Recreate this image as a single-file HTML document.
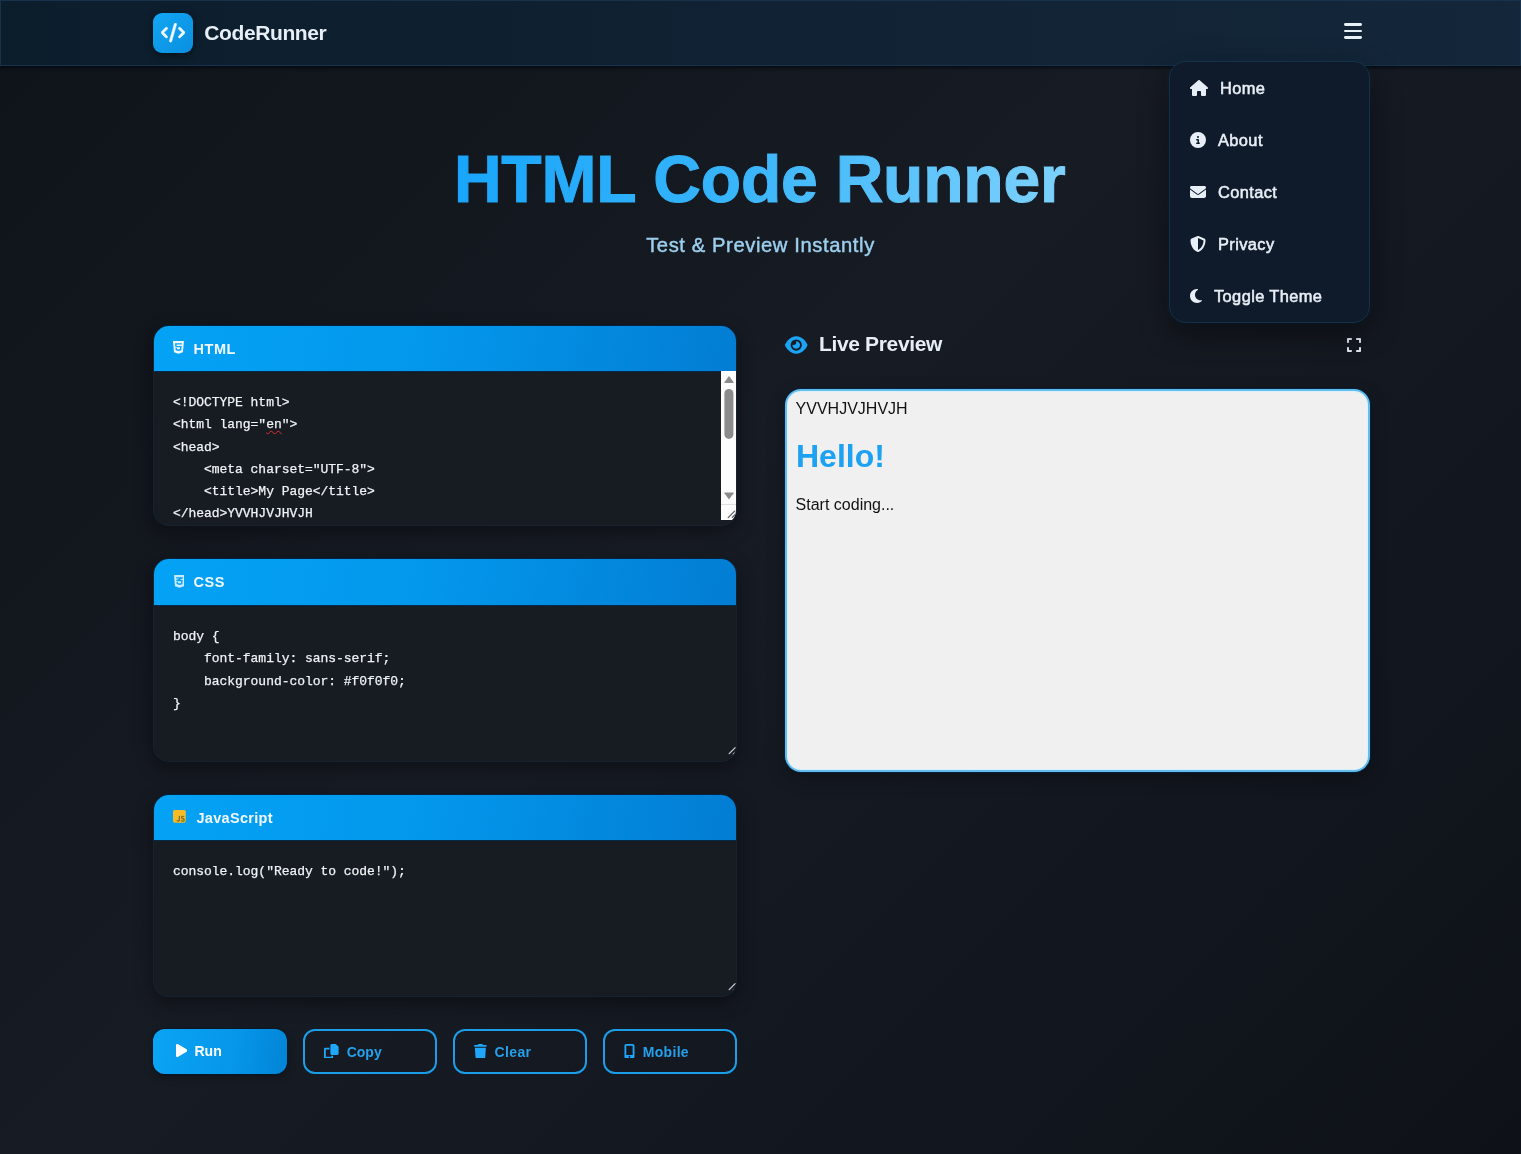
<!DOCTYPE html>
<html lang="en">
<head>
<meta charset="UTF-8">
<title>HTML Code Runner</title>
<style>
*{box-sizing:border-box;margin:0;padding:0}
html,body{width:1521px;height:1154px;overflow:hidden}
body{
  font-family:"Liberation Sans",sans-serif;
  background:linear-gradient(135deg,#0f141a 0%,#13171e 25%,#171b23 45%,#13171f 70%,#0e1218 100%);
  color:#e6edf5;position:relative;
}

/* header */
.hdr{position:absolute;left:0;top:0;width:1521px;height:66px;
  background:linear-gradient(90deg,#0c1d2c 0%,#102233 50%,#14273a 100%);
  box-shadow:inset 0 0 0 1px #17324a, 0 2px 3px rgba(2,8,16,.75)}
.logo{position:absolute;left:153px;top:13px;width:40px;height:40px;border-radius:9px;
  background:linear-gradient(135deg,#12a6f3,#0a8fe0);box-shadow:0 2px 8px rgba(0,0,0,.45)}
.logo svg{position:absolute}
.brand{position:absolute;left:204.3px;top:19px;font-size:21px;font-weight:700;line-height:28px;color:#e8eef6;letter-spacing:-0.4px}
.burger{position:absolute;left:1343.5px;top:23px;width:18px;height:16px}
.burger i{position:absolute;left:0;width:18px;height:2.7px;border-radius:1.4px;background:#e8f0f8}
/* dropdown */
.menu{position:absolute;left:1169px;top:61px;width:201px;height:262px;border-radius:17px;
  background:#0f1b2b;border:1px solid #13324a;box-shadow:0 10px 30px rgba(0,0,0,.45),0 0 10px rgba(30,120,190,.10)}
.mi{position:absolute;left:0;width:100%;height:52px;font-size:16.4px;font-weight:400;color:#e8eef6}
.mi span{position:absolute;top:16.5px;line-height:18px;white-space:nowrap;-webkit-text-stroke:0.55px #e8eef6;letter-spacing:0.4px}
.mi svg{position:absolute}
/* hero */
h1.title{position:absolute;left:0;top:139px;width:1519.4px;text-align:center;font-size:66px;line-height:80px;font-weight:700;letter-spacing:-0.2px;
  white-space:nowrap}
h1.title span{display:inline-block;padding:0 4px;background:linear-gradient(100deg,#17a5fb 0%,#37b4fb 45%,#7fd2fc 100%);-webkit-background-clip:text;background-clip:text;color:transparent;-webkit-text-stroke:1.1px transparent}
.sub{position:absolute;left:0;top:231px;width:1521px;text-align:center;font-size:20.2px;line-height:28px;font-weight:400;color:#9ccfee;-webkit-text-stroke:0.45px #9ccfee;letter-spacing:0.6px}
/* panels */
.panel{position:absolute;left:153px;width:584px;border-radius:16px;background:#171b22;border:1px solid #16232f;border-top-color:#04213f;overflow:hidden}
.pshadow{position:absolute;left:153px;width:584px;border-radius:16px;box-shadow:0 6px 18px rgba(0,0,0,.38)}
.ph{position:absolute;left:0;top:0;width:100%;height:46px;background:linear-gradient(100deg,#04a2f5 0%,#0398ec 45%,#027dd3 100%);border-bottom:1px solid #05294a}
.ph span{position:absolute;left:39.5px;top:13.5px;font-size:14.5px;line-height:18px;font-weight:700;color:#f2f8fd;letter-spacing:0.55px}
.ph svg{position:absolute}
pre.code{position:absolute;left:19px;top:66px;font-family:"Liberation Mono",monospace;font-size:13px;line-height:22.3px;color:#f0f3f6;letter-spacing:-0.04px;white-space:pre;-webkit-text-stroke:0.25px #f0f3f6}
.sp{text-decoration:underline wavy #e5282e;text-decoration-thickness:1.2px;text-underline-offset:1.6px}
/* buttons */
.btn{font-family:inherit;background:transparent;padding:0;margin:0;text-align:left;display:block;position:absolute;top:1029px;width:134px;height:45px;border-radius:12px;border:2px solid #1c9de8;color:#25a1ec;font-size:14px;font-weight:700}
.btn span{position:absolute;top:12px;line-height:18px}
.btn svg{position:absolute}
.btn.run{background:linear-gradient(100deg,#0ba4f4 0%,#0696ea 60%,#0284d6 100%);border:none;color:#fff;box-shadow:0 0 0 1px rgba(2,22,44,.55),0 3px 10px rgba(0,0,0,.3)}
/* preview */
.pv-title{position:absolute;left:819px;top:330px;font-size:21px;line-height:28px;font-weight:700;color:#e8eef6;letter-spacing:-0.35px}
.frame{position:absolute;left:785px;top:389px;width:585px;height:383px;border-radius:16px;background:#f0f0f0;border:2px solid #62bdec;
  box-shadow:0 0 0 1px rgba(3,35,70,.8), inset 0 0 0 1px #dcf1fb, 0 6px 18px rgba(0,0,0,.3)}
.frame .t1{position:absolute;left:8.6px;top:9px;font-size:16px;line-height:18px;color:#111}
.frame .h{position:absolute;left:9px;top:47px;font-size:32px;line-height:37px;font-weight:700;color:#1da1f2}
.frame .t2{position:absolute;left:8.6px;top:105px;font-size:16px;line-height:18px;color:#111}
</style>
</head>
<body>
<div id="root" style="position:absolute;left:0;top:0;width:1521px;height:1154px;will-change:transform">

<!-- HEADER -->
<header class="hdr">
  <div class="logo"><svg style="left:8px;top:10.4px;position:absolute;" width="24.00" height="19.2" viewBox="0 0 640 512" fill="#eef8ff" stroke="#eef8ff" stroke-width="14" stroke-linejoin="round"><path d="M392.800 1.200c-17-4.900-34.700 5-39.600 22l-128 448c-4.900 17 5 34.700 22 39.600s34.700-5 39.600-22l128-448c4.900-17-5-34.700-22-39.600zm80.600 120.100c-12.500 12.500-12.500 32.800 0 45.300L562.700 256l-89.400 89.400c-12.500 12.500-12.500 32.800 0 45.300s32.800 12.500 45.300 0l112-112c12.500-12.500 12.500-32.800 0-45.300l-112-112c-12.500-12.500-32.800-12.500-45.300 0zm-306.700 0c-12.500-12.500-32.800-12.500-45.300 0l-112 112c-12.500 12.500-12.500 32.800 0 45.300l112 112c12.500 12.500 32.800 12.500 45.300 0s12.500-32.800 0-45.300L77.300 256l89.400-89.400c12.500-12.500 12.500-32.800 0-45.300z"/></svg></div>
  <div class="brand">CodeRunner</div>
  <div class="burger"><i style="top:0"></i><i style="top:6.5px"></i><i style="top:13px"></i></div>
</header>

<!-- HERO -->
<h1 class="title"><span>HTML Code Runner</span></h1>
<div class="sub">Test &amp; Preview Instantly</div>

<!-- PANELS -->
<div class="pshadow" style="top:325px;height:201px"></div>
<div class="panel" style="top:325px;height:201px">
  <div class="ph"><svg style="left:19.0px;top:14.0px;" width="10.95" height="14.6" viewBox="0 0 384 512" fill="#f2f9fe"><path d="M0 32l34.900 395.800L191.500 480l157.600-52.200L384 32H0zm308.200 127.900H124.400l4.100 49.400h175.600l-13.600 148.400-97.900 27v.3h-1.100l-98.700-27.300-6-75.800h47.700L138 320l53.500 14.500 53.700-14.500 6-62.200H84.300L71.500 112.200h241.100l-4.400 47.700z"/></svg><span>HTML</span></div>
<pre class="code">&lt;!DOCTYPE html&gt;
&lt;html lang="<span class="sp">en</span>"&gt;
&lt;head&gt;
    &lt;meta charset="UTF-8"&gt;
    &lt;title&gt;My Page&lt;/title&gt;
&lt;/head&gt;YVVHJVJHVJH</pre>
  <svg class="sb" style="position:absolute;left:567px;top:45px" width="15" height="149" viewBox="0 0 15 149">
    <rect x="0" y="0" width="15" height="149" fill="#fcfcfc"/>
    <path d="M8 4.9 L12.6 11.2 Q12.9 11.9 12.1 11.9 L3.9 11.9 Q3.1 11.9 3.4 11.2 Z" fill="#8b8b8b"/>
    <rect x="3.4" y="17.9" width="9" height="50" rx="4.5" fill="#8b8b8b"/>
    <path d="M8 128.6 L12.6 122.3 Q12.9 121.6 12.1 121.6 L3.9 121.6 Q3.1 121.6 3.4 122.3 Z" fill="#8b8b8b"/>
    <rect x="0" y="133" width="15" height="1" fill="#dedede"/>
    <path d="M7.2 146.6 L13.6 140.2 M11.3 146.4 L13.7 144" stroke="#5a5a5a" stroke-width="1.2" fill="none" stroke-linecap="round"/>
  </svg>
</div>

<div class="pshadow" style="top:558px;height:204px"></div>
<div class="panel" style="top:558px;height:204px">
  <div class="ph" style="height:47px"><svg style="left:19.5px;top:15.0px;" width="10.95" height="14.6" viewBox="0 0 384 512" fill="#c9ebfc"><path d="M0 32l34.900 395.800L192 480l157.100-52.200L384 32H0zm313.100 80l-4.800 47.300L193 208.600l-.3.100h111.500l-12.800 146.600-98.200 28.700-98.800-29.200-6.400-73.900h48.900l3.200 38.300 52.600 13.300 54.700-15.400 3.700-61.600-166.300-.5v-.1l-.2.100-3.600-46.300L193.100 162l6.500-2.700H76.700L70.900 112h242.200z"/></svg><span>CSS</span></div>
<pre class="code" style="top:67px">body {
    font-family: sans-serif;
    background-color: #f0f0f0;
}</pre>
  <svg style="position:absolute;left:573px;top:186px" width="10" height="10" viewBox="0 0 10 10"><path d="M2.2 8.6 L8.2 2.6" stroke="#c9cdd3" stroke-width="1.3" stroke-linecap="round" fill="none"/><path d="M6.2 9.2 L8.8 6.6" stroke="#c9cdd3" stroke-width="1.1" stroke-linecap="round" fill="none"/></svg>
</div>

<div class="pshadow" style="top:794px;height:203px"></div>
<div class="panel" style="top:794px;height:203px">
  <div class="ph"><svg style="left:19.4px;top:14.2px;" width="12.78" height="14.6" viewBox="0 0 448 512" fill="#f8bb25"><rect x="100" y="225" width="330" height="235" fill="#6f6c2c"/><path d="M448 96c0-35.300-28.700-64-64-64H64C28.700 32 0 60.700 0 96V416c0 35.300 28.700 64 64 64H384c35.300 0 64-28.700 64-64V96zM180.900 444.900c-33.700 0-53.200-17.400-63.200-38.500L152 385.700c6.600 11.700 12.600 21.600 27.100 21.600c13.800 0 22.600-5.400 22.600-26.500V237.700h42.100V381.400c0 43.600-25.600 63.500-62.900 63.500zm85.800-43L301 382.100c9 14.700 20.800 25.600 41.500 25.600c17.400 0 28.600-8.700 28.600-20.800c0-14.400-11.400-19.500-30.700-28l-10.500-4.500c-30.400-12.900-50.500-29.200-50.500-63.500c0-31.600 24.100-55.600 61.600-55.600c26.800 0 46 9.300 59.800 33.700L368 290c-7.200-12.900-15-18-27.100-18c-12.300 0-20.100 7.800-20.100 18c0 12.600 7.800 17.700 25.900 25.600l10.500 4.500c35.800 15.300 55.900 31 55.900 66.200c0 37.800-29.800 58.600-69.700 58.600c-39.100 0-64.400-18.600-76.700-43z"/></svg><span style="left:42.5px;letter-spacing:0.3px">JavaScript</span></div>
<pre class="code">console.log("Ready to code!");</pre>
  <svg style="position:absolute;left:573px;top:185.5px" width="10" height="10" viewBox="0 0 10 10"><path d="M2.2 8.6 L8.2 2.6" stroke="#c9cdd3" stroke-width="1.3" stroke-linecap="round" fill="none"/><path d="M6.2 9.2 L8.8 6.6" stroke="#c9cdd3" stroke-width="1.1" stroke-linecap="round" fill="none"/></svg>
</div>

<!-- BUTTONS -->
<button type="button" class="btn run" style="left:153px"><svg style="left:23px;top:14.0px;" width="11.25" height="15" viewBox="0 0 384 512" fill="#ffffff"><path d="M73 39c-14.800-9.100-33.400-9.400-48.500-.9S0 62.600 0 80V432c0 17.400 9.400 33.400 24.500 41.900s33.700 8.100 48.500-.9L361 297c14.300-8.700 23-24.200 23-41s-8.700-32.200-23-41L73 39z"/></svg><span style="left:41.5px;top:13px">Run</span></button>
<button type="button" class="btn" style="left:303px"><svg style="left:19.0px;top:12.599999999999909px;" width="14.60" height="14.6" viewBox="0 0 512 512" fill="#1ea7fb"><path d="M272 0H396.100c12.700 0 24.900 5.100 33.900 14.100l67.900 67.900c9 9 14.100 21.200 14.100 33.900V336c0 26.500-21.500 48-48 48H272c-26.500 0-48-21.500-48-48V48c0-26.500 21.500-48 48-48zM48 128H192v64H64V448H256V416h64v48c0 26.500-21.500 48-48 48H48c-26.500 0-48-21.500-48-48V176c0-26.500 21.500-48 48-48z"/></svg><span style="left:41.7px">Copy</span></button>
<button type="button" class="btn" style="left:453px"><svg style="left:19.0px;top:12.5px;" width="12.78" height="14.6" viewBox="0 0 448 512" fill="#1ea7fb"><path d="M135.200 17.700L128 32H32C14.300 32 0 46.300 0 64S14.300 96 32 96H416c17.700 0 32-14.300 32-32s-14.300-32-32-32H320l-7.200-14.300C307.400 6.800 296.300 0 284.200 0H163.800c-12.100 0-23.200 6.800-28.600 17.700zM416 128H32L53.200 467c1.600 25.300 22.600 45 47.900 45H346.900c25.300 0 46.300-19.700 47.900-45L416 128z"/></svg><span style="left:39.6px;letter-spacing:0.35px">Clear</span></button>
<button type="button" class="btn" style="left:603px"><svg style="left:19.3px;top:12.5px;" width="10.95" height="14.6" viewBox="0 0 384 512" fill="#1ea7fb"><path d="M16 64C16 28.700 44.700 0 80 0H304c35.300 0 64 28.700 64 64V448c0 35.300-28.700 64-64 64H80c-35.300 0-64-28.700-64-64V64zM224 448a32 32 0 1 0 -64 0 32 32 0 1 0 64 0zM304 64H80V384H304V64z"/></svg><span style="left:37.8px;letter-spacing:0.3px">Mobile</span></button>

<!-- PREVIEW -->
<svg style="left:785px;top:334.5px;position:absolute;" width="22.50" height="20" viewBox="0 0 576 512" fill="#1aa4f6"><path d="M288 32c-80.800 0-145.500 36.800-192.600 80.600C48.600 156 17.300 208 2.500 243.700c-3.300 7.900-3.300 16.700 0 24.600C17.300 304 48.600 356 95.400 399.400C142.500 443.200 207.200 480 288 480s145.500-36.800 192.600-80.600c46.800-43.500 78.100-95.400 93-131.100c3.300-7.900 3.300-16.700 0-24.600c-14.900-35.700-46.200-87.700-93-131.100C433.500 68.800 368.800 32 288 32zM144 256a144 144 0 1 1 288 0 144 144 0 1 1 -288 0zm144-64c0 35.300-28.700 64-64 64c-7.100 0-13.900-1.200-20.300-3.300c-5.500-1.800-11.900 1.600-11.700 7.400c.3 6.900 1.300 13.800 3.200 20.700c13.700 51.200 66.400 81.600 117.600 67.900s81.600-66.400 67.900-117.600c-11.100-41.500-47.800-69.400-88.600-71.100c-5.800-.2-9.200 6.100-7.400 11.700c2.100 6.400 3.300 13.200 3.300 20.300z"/></svg>
<svg style="left:1347.2px;top:336.6px;position:absolute;" width="14.00" height="16" viewBox="0 0 448 512" fill="#e3e8ef"><path d="M32 32C14.300 32 0 46.300 0 64v96c0 17.700 14.300 32 32 32s32-14.300 32-32V96h64c17.700 0 32-14.300 32-32s-14.300-32-32-32H32zM64 352c0-17.700-14.300-32-32-32s-32 14.300-32 32v96c0 17.700 14.300 32 32 32h96c17.700 0 32-14.300 32-32s-14.300-32-32-32H64V352zM320 32c-17.700 0-32 14.300-32 32s14.300 32 32 32h64v64c0 17.700 14.300 32 32 32s32-14.300 32-32V64c0-17.700-14.300-32-32-32H320zM448 352c0-17.700-14.300-32-32-32s-32 14.300-32 32v64H320c-17.700 0-32 14.300-32 32s14.300 32 32 32h96c17.700 0 32-14.300 32-32V352z"/></svg>
<div class="pv-title">Live Preview</div>
<div class="frame">
  <div class="t1">YVVHJVJHVJH</div>
  <div class="h">Hello!</div>
  <div class="t2">Start coding...</div>
</div>

<!-- DROPDOWN -->
<nav class="menu">
  <div class="mi" style="top:0"><svg style="left:19.5px;top:17.5px;" width="18.00" height="16" viewBox="0 0 576 512" fill="#e8eef6"><path d="M575.8 255.5c0 18-15 32.1-32 32.1h-32l.7 160.2c0 2.700-.2 5.400-.5 8.100V472c0 22.100-17.900 40-40 40H456c-1.100 0-2.200 0-3.300-.1c-1.400 .1-2.800 .1-4.200 .1H416 392c-22.100 0-40-17.900-40-40V448 384c0-17.700-14.300-32-32-32H256c-17.700 0-32 14.300-32 32v64 24c0 22.100-17.900 40-40 40H160 128.100c-1.500 0-3-.1-4.500-.2c-1.200 .1-2.400 .2-3.600 .2H104c-22.100 0-40-17.900-40-40V360c0-.9 0-1.900 .1-2.800V287.600H32c-18 0-32-14-32-32.100c0-9 3-17 10-24L266.400 8c7-7 15-8 22-8s15 2 21 7L564.800 231.500c8 7 12 15 11 24z"/></svg><span style="left:50px">Home</span></div>
  <div class="mi" style="top:52px"><svg style="left:19.5px;top:17.5px;" width="16.00" height="16" viewBox="0 0 512 512" fill="#e8eef6"><path d="M256 512A256 256 0 1 0 256 0a256 256 0 1 0 0 512zM216 336h24V272H216c-13.300 0-24-10.700-24-24s10.700-24 24-24h48c13.300 0 24 10.700 24 24v88h8c13.300 0 24 10.700 24 24s-10.700 24-24 24H216c-13.300 0-24-10.700-24-24s10.700-24 24-24zm40-208a32 32 0 1 1 0 64 32 32 0 1 1 0-64z"/></svg><span style="left:48px">About</span></div>
  <div class="mi" style="top:104px"><svg style="left:19.5px;top:17.5px;" width="16.00" height="16" viewBox="0 0 512 512" fill="#e8eef6"><path d="M48 64C21.500 64 0 85.500 0 112c0 15.100 7.100 29.300 19.200 38.400L236.800 313.600c11.400 8.500 27 8.500 38.400 0L492.800 150.400c12.100-9.100 19.200-23.300 19.200-38.400c0-26.500-21.500-48-48-48H48zM0 176V384c0 35.300 28.700 64 64 64H448c35.300 0 64-28.700 64-64V176L294.400 339.200c-22.800 17.100-54 17.100-76.800 0L0 176z"/></svg><span style="left:48px">Contact</span></div>
  <div class="mi" style="top:156px"><svg style="left:19.5px;top:17.5px;" width="16.00" height="16" viewBox="0 0 512 512" fill="#e8eef6"><path d="M256 0c4.600 0 9.200 1 13.400 2.900L457.700 82.800c22 9.300 38.400 31 38.300 57.200c-.5 99.200-41.300 280.700-213.600 363.200c-16.700 8-36.100 8-52.800 0C57.300 420.700 16.500 239.200 16 140c-.1-26.200 16.300-47.900 38.300-57.200L242.700 2.900C246.800 1 251.400 0 256 0zm0 66.800V444.800C394 378 431.100 230.100 432 141.400L256 66.800z"/></svg><span style="left:48px">Privacy</span></div>
  <div class="mi" style="top:208px"><svg style="left:19.5px;top:17.5px;" width="12.00" height="16" viewBox="0 0 384 512" fill="#e8eef6"><path d="M223.500 32C100 32 0 132.300 0 256S100 480 223.500 480c60.600 0 115.500-24.200 155.800-63.400c5-4.900 6.300-12.500 3.100-18.700s-10.100-9.700-17-8.500c-9.800 1.700-19.800 2.600-30.100 2.600c-96.900 0-175.500-78.800-175.500-176c0-65.800 36-123.100 89.300-153.300c6.100-3.500 9.200-10.500 7.700-17.300s-7.300-11.900-14.300-12.500c-6.300-.5-12.600-.8-19-.8z"/></svg><span style="left:44px">Toggle Theme</span></div>
</nav>

</div>
</body>
</html>
